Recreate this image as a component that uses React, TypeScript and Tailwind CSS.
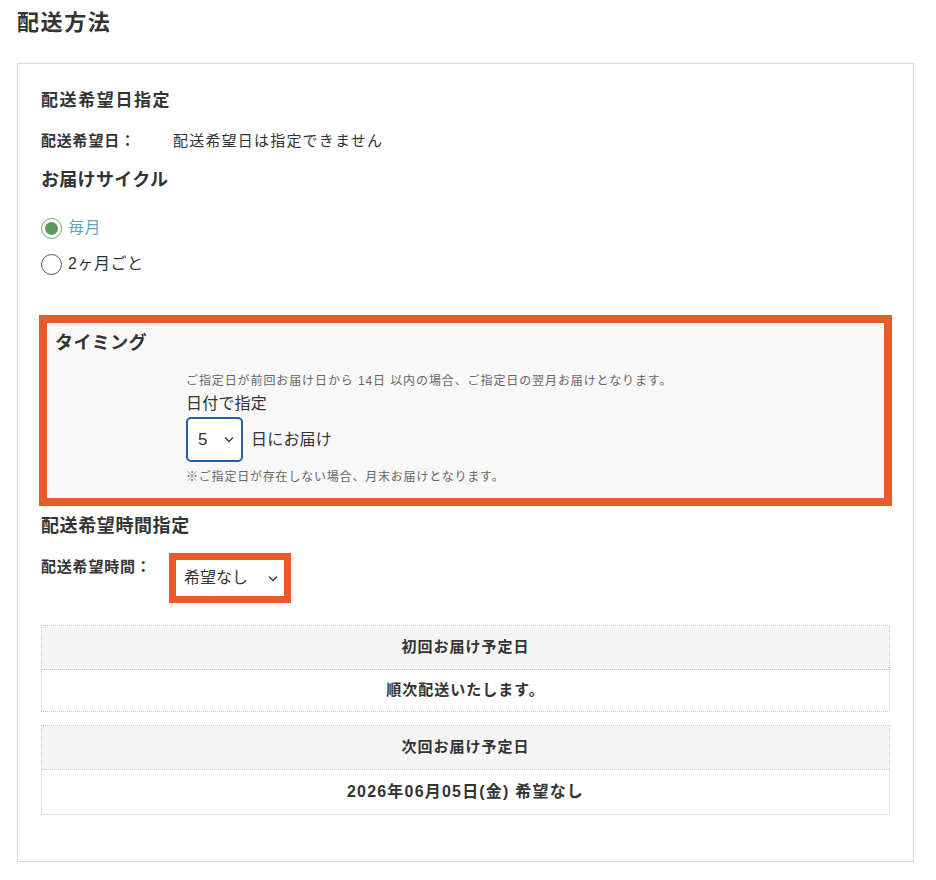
import React from "react";

const font = { fontFamily: '"Liberation Sans", "Noto Sans CJK JP", sans-serif' };

function Chevron({ className = "" }: { className?: string }) {
  return (
    <svg width="10" height="7" viewBox="0 0 10 7" className={className}>
      <polyline points="1,1.5 5,5.5 9,1.5" fill="none" stroke="#333" strokeWidth="1.3" />
    </svg>
  );
}

function Radio({ checked, label }: { checked: boolean; label: string }) {
  return (
    <div className="flex items-center h-[24px]">
      {checked ? (
        <span className="w-[21px] h-[21px] rounded-full border-[1.5px] border-[#6aa86a] bg-white flex items-center justify-center">
          <span className="w-[13px] h-[13px] rounded-full bg-[#5c9a5c]" />
        </span>
      ) : (
        <span className="w-[21px] h-[21px] rounded-full border border-[#555] bg-white" />
      )}
      <span className={`ml-[6px] text-[16px] leading-[24px] tracking-[0.5px] ${checked ? "text-[#5ba8b8]" : "text-[#333]"}`}>{label}</span>
    </div>
  );
}

function InfoTable({ head, body, bodyClass, rowH }: { head: string; body: string; bodyClass: string; rowH: string }) {
  return (
    <div className="border border-dotted border-[#c8c8c8]">
      <div className="h-[44px] bg-[#f5f5f5] flex items-center justify-center text-[15px] tracking-[1px] font-bold text-[#333] border-b border-dotted border-[#c8c8c8]">
        {head}
      </div>
      <div className={`bg-white flex items-center justify-center font-bold text-[#333] ${rowH} ${bodyClass}`}>
        {body}
      </div>
    </div>
  );
}

export default function App() {
  return (
    <div className="bg-white w-[936px] h-[880px] pl-[17px] pr-[22px] text-[#333]" style={font}>
      <h1 className="pt-[8px] text-[22px] leading-[30px] tracking-[1.6px] font-bold text-[#333]">配送方法</h1>
      <div className="mt-[25px] border border-[#dcdcdc] pt-[25px] px-[23px] pb-[46px]">
        <h3 className="text-[17px] leading-[24px] tracking-[1.6px] font-bold">配送希望日指定</h3>
        <div className="mt-[18px] flex text-[15px] leading-[20px]">
          <span className="w-[132px] font-bold tracking-[0.8px]">配送希望日：</span>
          <span className="tracking-[1.2px]">配送希望日は指定できません</span>
        </div>
        <h3 className="mt-[16px] text-[18px] leading-[26px] tracking-[0.3px] font-bold">お届けサイクル</h3>
        <div className="mt-[23px]">
          <Radio checked label="毎月" />
        </div>
        <div className="mt-[12px]">
          <Radio checked={false} label="2ヶ月ごと" />
        </div>

        <div className="mt-[39px] -mx-[2px] border-[8px] border-[#e95a28] bg-[#f8f8f9] pt-[8px] pb-[12px]">
          <h3 className="pl-[8px] text-[18px] leading-[24px] tracking-[0.4px] font-bold">タイミング</h3>
          <div className="pl-[139px]">
            <p className="mt-[17px] text-[12px] leading-[18px] tracking-[0.9px] text-[#666]">
              ご指定日が前回お届け日から 14日 以内の場合、ご指定日の翌月お届けとなります。
            </p>
            <p className="mt-[3px] text-[16px] leading-[22px] tracking-[0.2px]">日付で指定</p>
            <div className="mt-[2px] flex items-center">
              <div className="w-[57px] h-[45px] border-2 border-[#2a5d9b] rounded-[5px] bg-white flex items-center justify-between pl-[10px] pr-[7px]">
                <span className="text-[17px]">5</span>
                <Chevron />
              </div>
              <span className="ml-[8px] text-[16px] tracking-[0.2px]">日にお届け</span>
            </div>
            <p className="mt-[6px] text-[12px] leading-[18px] tracking-[0.8px] text-[#666]">※ご指定日が存在しない場合、月末お届けとなります。</p>
          </div>
        </div>

        <h3 className="mt-[8px] text-[18px] leading-[24px] tracking-[0.6px] font-bold">配送希望時間指定</h3>
        <div className="mt-[15px] flex">
          <span className="w-[128px] pt-[4px] text-[15px] leading-[20px] tracking-[0.8px] font-bold">配送希望時間：</span>
          <div className="w-[122px] h-[50px] border-[7px] border-[#e95a28] bg-white flex items-center justify-between pl-[8px] pr-[6px]">
            <span className="text-[16px]">希望なし</span>
            <Chevron />
          </div>
        </div>

        <div className="mt-[22px]">
          <InfoTable head="初回お届け予定日" body="順次配送いたします。" bodyClass="text-[15px] tracking-[1px]" rowH="h-[41px]" />
        </div>
        <div className="mt-[13px]">
          <InfoTable head="次回お届け予定日" body="2026年06月05日(金) 希望なし" bodyClass="text-[16px] tracking-[1.2px]" rowH="h-[44px]" />
        </div>
      </div>
    </div>
  );
}
